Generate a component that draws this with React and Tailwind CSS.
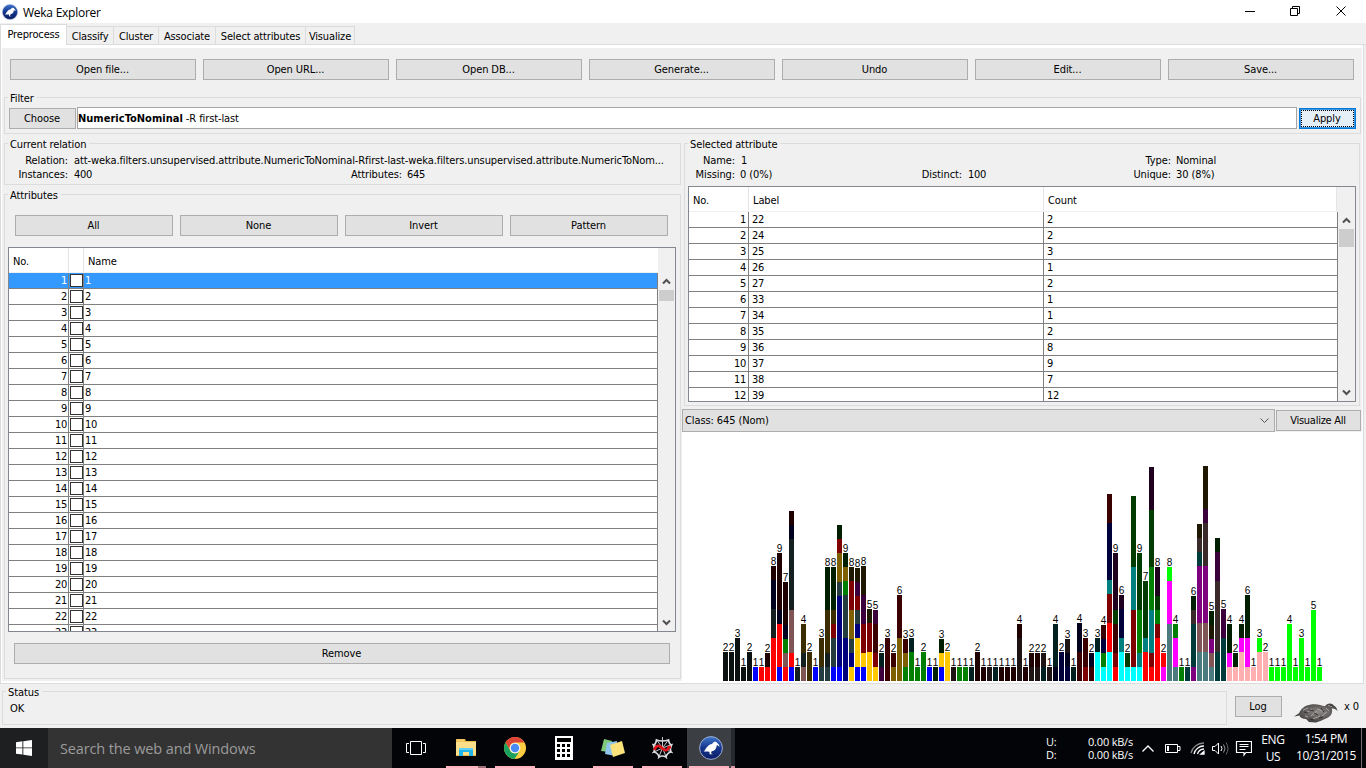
import React from "react";

const K = {
  k: "#0b1010", b: "#0000ff", r: "#ff0000", d: "#1f0000", n: "#00001f", g: "#141f1f",
  w: "#7f5555", G: "#007f00", o: "#3b2d00", s: "#243b3f", e: "#001f00", R: "#7f0000",
  O: "#7f6000", N: "#00007f", y: "#ffc800", t: "#1f1800", p: "#3b003b", m: "#3b0000",
  T: "#001f1f", h: "#1f1414", v: "#00003b", c: "#00ffff", C: "#007f7f", E: "#003b00",
  P: "#1f001f", M: "#ff00ff", S: "#4b7b7f", L: "#00ff00", q: "#003b3b", V: "#7f007f",
  H: "#3b2a2a", i: "#ffafaf",
};

// One entry per attribute value; each letter is a single instance, bottom to top.
const BARS = (
  "kk kk kkk k kk b r rd rrrggnnd brrrndddd rwGnddd brwwwgggggnd g wgoo oo b soo sgoooeee bssRoeee " +
  "bNNNNNsOORe NNNsssGOe yNsOORRt byyNsRpt byRRpptt yyRRt yRmmp pT mmm Om OOOmmm GOm GGT G GG b e bye yy " +
  "h G G T dd d h T d d d hhhd d hd hd Th h nTTT vv vnh T mmnn Rmm mn ccT cGvm ccrrRRCvvvvmm rRmmEPPPP " +
  "ccCvvP cE cRRRRCCCEEEEE cCGGGEEEE rrCEEEE rRCCCGGGEEEEPPP rrrRGEPP Mr SSSSMMML SMMG G q VqqqHe " +
  "SSwwVVVVqHt SSwwVVVVHHHpttt SwVte qqHHHHHppe qqqpp iMee ie iiMe iMMeee i iiL ii L L L LLLL L LLL L LLLLL L"
).split(" ");

const UNIT = 14.29;
const BASE = 249;

function stack(bar) {
  let y = BASE;
  return bar.match(/(.)\1*/g).map((run) => {
    const h = Math.round(run.length * UNIT);
    y -= h;
    return { y, h, fill: K[run[0]] };
  });
}

function Histogram() {
  return (
    <svg width="681" height="250" className="block bg-white" shapeRendering="crispEdges">
      {BARS.map((bar, i) => {
        const x = 41 + i * 6;
        const parts = stack(bar);
        return (
          <g key={i}>
            {parts.map((p, j) => (
              <rect key={j} x={x} y={p.y} width="5" height={p.h} fill={p.fill} />
            ))}
            {bar.length < 10 && (
              <text x={x + 2.5} y={parts[parts.length - 1].y - 1} textAnchor="middle" fontSize="10" fontFamily="Liberation Sans, sans-serif" fill="#000">
                {bar.length}
              </text>
            )}
          </g>
        );
      })}
    </svg>
  );
}

function Btn({ children, className = "" }) {
  return (
    <button className={"flex h-[21px] shrink-0 items-center justify-center border border-[#adadad] bg-[#e1e1e1] pr-px whitespace-nowrap " + className}>
      {children}
    </button>
  );
}

function Group({ title, className = "", children }) {
  return (
    <section className={"shrink-0 border border-[#dcdcdc] " + className}>
      <div className="-mt-[7px] flex h-[15px]">
        <span className="ml-[3px] h-[15px] bg-[#f0f0f0] pt-px pr-[3px] pl-[2px] leading-[14px] whitespace-nowrap">{title}</span>
      </div>
      {children}
    </section>
  );
}

function Arrow({ down }) {
  return (
    <svg width="9" height="7" viewBox="0 0 9 7" className="block">
      <path d={down ? "M1 1.5 L4.5 5 L8 1.5" : "M1 5.5 L4.5 2 L8 5.5"} fill="none" stroke="#505050" strokeWidth="2" />
    </svg>
  );
}

function Scrollbar({ thumb }) {
  return (
    <div className="flex w-[17px] shrink-0 flex-col items-center bg-[#f0f0f0]">
      <div className="flex h-[17px] items-center"><Arrow /></div>
      <div className={"w-[15px] bg-[#cdcdcd] " + thumb} />
      <div className="mt-auto flex h-[17px] items-center"><Arrow down /></div>
    </div>
  );
}

function AttributeTable() {
  return (
    <div className="ml-[3px] flex h-[385px] w-[668px] flex-col border border-[#828790] bg-white">
      <div className="flex h-[25px] shrink-0 items-center border-b border-[#f0f0f0]">
        <span className="flex h-full w-[60px] items-center border-r border-[#e5e5e5] pt-[3px] pl-[4px]">No.</span>
        <span className="h-full w-[15px] border-r border-[#e5e5e5]" />
        <span className="flex h-full w-[574px] items-center pt-[3px] pl-[4px]">Name</span>
        <span className="h-full flex-1 bg-[#f0f0f0]" />
      </div>
      <div className="flex min-h-0 flex-1">
        <div className="w-[649px] overflow-hidden border-r border-[#808080]">
          {Array.from({ length: 23 }, (_, i) => (
            <div key={i} className={"flex h-[16px] border-b border-[#808080] leading-[15px] tracking-[-0.25px] " + (i === 0 ? "bg-[#3399ff] text-white" : "")}>
              <span className="w-[60px] border-r border-[#808080] pr-px text-right">{i + 1}</span>
              <span className="w-[15px] border-r border-[#808080] pt-px pl-px">
                <span className="block h-[13px] w-[13px] border border-[#333] bg-white" />
              </span>
              <span className="pl-[1px]">{i + 1}</span>
            </div>
          ))}
        </div>
        <Scrollbar thumb="h-[11px]" />
      </div>
    </div>
  );
}

const LABELS = [[22, 2], [24, 2], [25, 3], [26, 1], [27, 2], [33, 1], [34, 1], [35, 2], [36, 8], [37, 9], [38, 7], [39, 12]];

function LabelTable() {
  return (
    <div className="ml-[3px] flex h-[216px] w-[668px] flex-col border border-[#828790] bg-white">
      <div className="flex h-[25px] shrink-0 items-center border-b border-[#f0f0f0]">
        <span className="flex h-full w-[60px] items-center border-r border-[#e5e5e5] pt-[3px] pl-[4px]">No.</span>
        <span className="flex h-full w-[295px] items-center border-r border-[#e5e5e5] pt-[3px] pl-[4px]">Label</span>
        <span className="flex h-full w-[293px] items-center border-r border-[#e5e5e5] pt-[3px] pl-[4px]">Count</span>
        <span className="h-full flex-1 bg-[#f0f0f0]" />
      </div>
      <div className="flex min-h-0 flex-1">
        <div className="w-[649px] overflow-hidden border-r border-[#808080]">
          {LABELS.map(([l, c], i) => (
            <div key={l} className="flex h-[16px] border-b border-[#808080] leading-[16px] tracking-[-0.25px]">
              <span className="w-[60px] border-r border-[#808080] pr-[2px] text-right">{i + 1}</span>
              <span className="w-[295px] border-r border-[#808080] pl-[3px]">{l}</span>
              <span className="pl-[3px]">{c}</span>
            </div>
          ))}
        </div>
        <Scrollbar thumb="h-[18px]" />
      </div>
    </div>
  );
}

function WekaIcon({ size }) {
  return (
    <svg width={size} height={size} viewBox="0 0 24 24" className="block shrink-0">
      <defs>
        <linearGradient id="wk" x1="0" y1="0" x2="0" y2="1">
          <stop offset="0" stopColor="#3f76cc" />
          <stop offset="0.5" stopColor="#15358c" />
          <stop offset="1" stopColor="#0b1d66" />
        </linearGradient>
      </defs>
      <circle cx="12" cy="12" r="11.4" fill="url(#wk)" stroke="#a9b8d8" strokeWidth="0.9" />
      <path d="M4.5 15.8 C6 14.5 6.8 11.5 9.5 9.4 C11 8.3 12.8 8.3 13.7 7.2 C14.5 5.3 17.6 5.1 18.5 7.3 C19.7 8.1 20.3 9.4 20.5 11 C19.6 9.8 18.7 9.2 17.7 9.3 C17.6 11.5 17 13.5 14.6 14.8 L12.4 15.6 L12.1 17.5 L14 18.3 L10.6 18.3 L10.5 15.8 C8.6 15.9 7.6 15.3 4.5 15.8Z" fill="#fff" />
    </svg>
  );
}

function Kiwi() {
  return (
    <svg width="46" height="22" viewBox="0 0 46 22" className="block shrink-0">
      <defs>
        <radialGradient id="kw" cx="0.55" cy="0.45" r="0.6">
          <stop offset="0" stopColor="#8e8a88" />
          <stop offset="0.6" stopColor="#5c5958" />
          <stop offset="1" stopColor="#353332" />
        </radialGradient>
      </defs>
      <path d="M1 14.5 L6 11.2 C8 6.5 12 3.3 18 2.5 C24 1.5 28 3.5 32 4.2 C34 .8 39 .6 40.8 3.5 C42.8 4.5 44 6.3 44.5 9 C42.8 7.2 41 6 38.8 6.5 C40 10.5 38.2 14.6 33.5 16.2 L28 18.8 L23 20.6 L16 20 L13 17 C9.5 17 7 15.5 6.5 13.5Z" fill="url(#kw)" />
      <path d="M10 8 l5 -2 M13 11 l6 -4 M18 14 l6 -5 M24 7 l6 2 M20 17 l7 -3 M29 14 l5 -4 M35 3.5 l4 1 M33 6 l3 3 M12 14 l3 1" stroke="#b5b0ad" strokeWidth="0.8" fill="none" />
      <path d="M11 10 l4 1 M16 8 l5 1 M21 11 l4 2 M17 17 l4 1 M28 6 l3 4 M26 16 l4 -1 M38 3 v1" stroke="#282626" strokeWidth="0.9" fill="none" />
    </svg>
  );
}

function TaskItem({ className, children, line = "" }) {
  return (
    <div className={"flex h-[40px] shrink-0 flex-col items-center " + className}>
      <div className="flex h-[38px] items-center pt-[2px]">{children}</div>
      <div className={"h-[2px] w-full " + line} />
    </div>
  );
}

function Taskbar() {
  return (
    <footer className="flex h-[40px] w-[1366px] shrink-0 bg-[#020408] font-['Open_Sans','Noto_Sans',sans-serif] tracking-normal text-white">
      <div className="flex w-[48px] shrink-0 items-center justify-center bg-[#1d1f21]">
        <svg width="16" height="16" viewBox="0 0 16 16"><path d="M0 2.2 L6.4 1.3 V7.4 H0Z M7.3 1.2 L16 0 V7.4 H7.3Z M0 8.3 H6.4 V14.6 L0 13.7Z M7.3 8.3 H16 V16 L7.3 14.7Z" fill="#fff" /></svg>
      </div>
      <div className="flex w-[344px] shrink-0 items-center bg-[#333] pt-[2px] pl-[12px] text-[14.5px] tracking-[-0.13px] text-[#9b9b9b]">
        Search the web and Windows
      </div>
      <TaskItem className="w-[48px]">
        <svg width="20" height="16" viewBox="0 0 20 16" fill="none" stroke="#fff"><path d="M4.5 1.5h11v13h-11z M3 3.5H.5v9H3 M17 3.5h2.500v9H17" /></svg>
      </TaskItem>
      <TaskItem className="ml-[6px] w-[40px]" line="bg-gradient-to-r from-[#ffb3be] from-80% to-[#a07078] to-80%">
        <svg width="22" height="20" viewBox="0 0 22 20">
          <path d="M1 1h9l1 2h10v15H1z" fill="#e9b94c" /><path d="M1 4h20v13H1z" fill="#ffe08a" /><path d="M2 1.500h7v2H2z" fill="#f7d06b" />
          <path d="M4 18v-8h14v8h-4v-4H8v4z" fill="#21b5ea" /><path d="M4 10h14v2H4z" fill="#62cff5" />
        </svg>
      </TaskItem>
      <TaskItem className="ml-[9px] w-[40px]" line="bg-[#ffb3be]">
        <svg width="22" height="22" viewBox="0 0 22 22">
          <circle cx="11" cy="11" r="11" fill="#ffcd42" />
          <path d="M1.5 5.5 A11 11 0 0 1 20.500 5.500 L11 5.500 A5.500 5.500 0 0 0 6.200 13.700Z" fill="#dc4437" />
          <path d="M1.500 5.500 A11 11 0 0 0 10.500 22 L15.700 13.800 A5.500 5.500 0 0 1 6.200 13.700Z" fill="#1aa15f" />
          <circle cx="11" cy="11" r="5.300" fill="#f4f4f4" /><circle cx="11" cy="11" r="4.200" fill="#4a8af4" />
        </svg>
      </TaskItem>
      <TaskItem className="ml-[9px] w-[40px]">
        <svg width="18" height="24" viewBox="0 0 18 24" shapeRendering="crispEdges">
          <path d="M0 0h18v24H0z" fill="#fff" />
          <path d="M2 2h14v4H2z M2 8h3v3H2z M7 8h3v3H7z M12 8h3v3h-3z M2 13h3v3H2z M7 13h3v3H7z M12 13h3v3h-3z M2 18h3v3H2z M7 18h3v3H7z M12 18h3v3h-3z" fill="#000" />
        </svg>
      </TaskItem>
      <TaskItem className="ml-[9px] w-[40px]" line="bg-[#ffb3be]">
        <svg width="24" height="19" viewBox="0 0 24 19">
          <path d="M3 0 L11 2 L8 13 L0 12Z" fill="#7fc97a" /><path d="M6 4 L16 2 L15 17 L4 15Z" fill="#8fc5ee" />
          <path d="M9 6 L21 2 L24 14 L12 18Z" fill="#fbe27a" />
        </svg>
      </TaskItem>
      <TaskItem className="ml-[9px] w-[40px]" line="bg-[#ffb3be]">
        <svg width="23" height="24" viewBox="0 0 23 24" fill="none" stroke="#ddd">
          <path d="M11.500 12 L11.500 1 M11.500 12 L18 3 M11.500 12 L22 8 M11.500 12 L22 17 M11.500 12 L16 23 M11.500 12 L7 23 M11.500 12 L1 17 M11.500 12 L1 8 M11.500 12 L5 3" strokeWidth="0.900" />
          <path d="M5.500 4 Q11 6 17.500 4 Q18 8 20.500 9 Q18.500 13 20 16 Q16 17 15 21 Q11.500 19 8 21 Q7 17 3 16 Q4.500 13 2.500 9 Q5 8 5.500 4Z" strokeWidth="1.700" />
          <path d="M3.500 14 C5 8.500 8.500 9 11.500 12.500 C14.500 15.500 17 14 17.500 11.500 L20 11" stroke="#e0141b" strokeWidth="2.800" />
        </svg>
      </TaskItem>
      <div className="ml-[5px] flex w-[48px] shrink-0">
        <TaskItem className="w-[44px] bg-[#3b3e42] pl-[4px]" line="-ml-[4px] w-[44px] bg-[#ffb3be]"><WekaIcon size={24} /></TaskItem>
        <TaskItem className="w-[4px] bg-[#25282c]" line="bg-[#d898a2]" />
      </div>
      <div className="ml-auto flex shrink-0">
        <div className="flex w-[87px] flex-col pt-[7px] text-[11px] leading-[13px] tracking-[-0.2px]">
          <div className="flex justify-between"><span>U:</span><span>0.00 kB/s</span></div>
          <div className="flex justify-between"><span>D:</span><span>0.00 kB/s</span></div>
        </div>
        <svg width="112" height="40" viewBox="1139 0 112 40" className="ml-[7px]" fill="none" stroke="#fff">
          <path d="M1141.500 23.500 l5.500 -5.500 l5.500 5.500" strokeWidth="1.300" />
          <path d="M1164.500 16.500h12v8h-12z M1177 18.500h2v4h-2" /><path d="M1166 18h2v5h-2z" fill="#fff" stroke="none" />
          <g strokeWidth="1.300"><path d="M1190 25 A13 13 0 0 1 1203 15" stroke="#888" /><path d="M1193 26 A10 10 0 0 1 1203 18" /><path d="M1196.500 26 A7 7 0 0 1 1203 21" /><path d="M1200 26 L1203 26 L1203 23.500Z" fill="#fff" /></g>
          <path d="M1211.500 18.500h2.500l3.500 -3.500v11l-3.500 -3.500h-2.500z" /><path d="M1220 18 q2 2.500 0 5" /><path d="M1222.500 16.500 q3 4 0 8" stroke="#999" /><path d="M1225 14.500 q4 6 0 12" stroke="#666" />
          <path d="M1235.500 13.500h15v11h-5.500l-2 2.500v-2.500h-7.500z M1238.500 16.500h9 M1238.500 18.500h9 M1238.500 21.500h6" strokeWidth="1.200" />
        </svg>
        <div className="ml-[8px] flex w-[26px] flex-col items-center pt-[3px] text-[12px] leading-[17px] tracking-[-0.3px]"><span>ENG</span><span>US</span></div>
        <div className="ml-[10px] flex w-[60px] flex-col items-center pt-[2px] text-[12px] leading-[17px] tracking-[-0.35px] whitespace-nowrap"><span>1:54 PM</span><span>10/31/2015</span></div>
        <div className="mr-[4px] ml-[5px] w-px bg-[#6c6e70]" />
      </div>
    </footer>
  );
}

const TABS = [["Classify", "w-[47px]"], ["Cluster", "w-[45px]"], ["Associate", "w-[57px]"], ["Select attributes", "w-[90px]"], ["Visualize", "w-[49px]"]];

export default function App() {
  return (
    <div className="flex h-[768px] w-[1366px] flex-col overflow-hidden bg-[#f0f0f0] font-['DejaVu_Sans_Condensed','DejaVu_Sans',sans-serif] text-[11px] leading-[14px] tracking-[-0.1px] text-black">
      <header className="flex h-[23px] shrink-0 items-center bg-white pl-[2px] font-['Open_Sans',sans-serif] text-[12px] tracking-[-0.25px]">
        <WekaIcon size={16} />
        <span className="ml-[5px] pt-[2px]">Weka Explorer</span>
        <svg width="110" height="14" viewBox="0 0 110 14" className="mr-[16px] mb-[2px] ml-auto" fill="none" stroke="#000">
          <path d="M5 7.500h10" /><path d="M50.500 4.500h7v7h-7z M52.500 4.500v-2h7v7h-2" /><path d="M96.500 2.500l9 9 M105.500 2.500l-9 9" />
        </svg>
      </header>
      <nav className="flex h-[22px] shrink-0 items-end">
        <div className="flex h-[21px] w-[67px] justify-center border-x border-t border-[#dcdcdc] bg-white pt-[3px] tracking-[-0.15px]">Preprocess</div>
        {TABS.map(([t, w]) => (
          <div key={t} className={"flex h-[19px] items-center justify-center border-y border-r border-[#dcdcdc] pt-[2px] tracking-[-0.15px] whitespace-nowrap " + w}>{t}</div>
        ))}
        <div className="h-px flex-1 bg-[#dcdcdc]" />
      </nav>
      <main className="mr-[2px] flex h-[639px] shrink-0 flex-col border-r border-b border-l border-[#dcdcdc] bg-white pt-[3px] pr-px pb-[2px] pl-px">
        <div className="flex min-h-0 flex-1 flex-col bg-[#f0f0f0] pl-[2px]">
          <div className="mt-[11px] ml-[6px] flex gap-[7px]">
            {["Open file...", "Open URL...", "Open DB...", "Generate...", "Undo", "Edit...", "Save..."].map((t) => <Btn key={t} className="w-[186px]">{t}</Btn>)}
          </div>
          <Group title="Filter" className="mt-[17px] h-[37px] w-[1357px]">
            <div className="mt-px ml-[4px] flex items-center">
              <Btn className="mt-px w-[67px]">Choose</Btn>
              <div className="ml-px flex h-[22px] w-[1220px] items-center border border-[#a5a5a5] bg-white pt-px whitespace-pre"><b className="tracking-[0.02px]">NumericToNominal</b> -R first-last</div>
              <button className="mt-px ml-[2px] h-[21px] w-[57px] border border-[#0078d7] bg-[#3a94df] p-px">
                <span className="flex h-full items-center justify-center border border-dotted border-black bg-[#e5eff8] pr-px">Apply</span>
              </button>
            </div>
          </Group>
          <div className="mt-[9px] flex">
            <div className="w-[677px] shrink-0">
              <Group title="Current relation" className="h-[42px] w-[677px]">
                <div className="mt-[2px] flex"><span className="w-[63px] text-right">Relation:</span><span className="ml-[6px] whitespace-nowrap">att-weka.filters.unsupervised.attribute.NumericToNominal-Rfirst-last-weka.filters.unsupervised.attribute.NumericToNom...</span></div>
                <div className="flex"><span className="w-[63px] text-right">Instances:</span><span className="ml-[6px] w-[60px] tracking-[-0.25px]">400</span><span className="w-[268px] text-right">Attributes:</span><span className="ml-[5px] tracking-[-0.25px]">645</span></div>
              </Group>
              <Group title="Attributes" className="mt-[9px] h-[485px] w-[677px]">
                <div className="mt-[12px] ml-[10px] flex gap-[7px]">
                  {["All", "None", "Invert", "Pattern"].map((t) => <Btn key={t} className="w-[158px]">{t}</Btn>)}
                </div>
                <div className="mt-[11px]"><AttributeTable /></div>
                <Btn className="mt-[11px] ml-[9px] w-[656px]">Remove</Btn>
              </Group>
            </div>
            <div className="ml-px flex w-[681px] shrink-0 flex-col">
              <Group title="Selected attribute" className="ml-[2px] h-[263px] w-[676px]">
                <div className="mt-[2px] flex"><span className="w-[50px] text-right">Name:</span><span className="ml-[6px] w-[60px]">1</span><span className="w-[370px] text-right">Type:</span><span className="ml-[5px]">Nominal</span></div>
                <div className="flex"><span className="w-[50px] text-right">Missing:</span><span className="ml-[5px] w-[61px]">0 (0%)</span><span className="w-[161px] text-right">Distinct:</span><span className="ml-[6px] w-[60px] tracking-[-0.25px]">100</span><span className="w-[143px] text-right">Unique:</span><span className="ml-[5px]">30 (8%)</span></div>
                <div className="mt-[4px]"><LabelTable /></div>
              </Group>
              <div className="mt-[3px] flex h-[23px] items-center">
                <div className="flex h-[23px] w-[593px] items-center justify-between border border-[#adadad] bg-[#e1e1e1] pr-[5px] pl-[2px]">
                  <span>Class: 645 (Nom)</span>
                  <svg width="9" height="7" viewBox="0 0 9 7" fill="none" stroke="#555"><path d="M0.500 1.500 L4.500 5.500 L8.500 1.500" /></svg>
                </div>
                <Btn className="ml-px w-[85px] tracking-[-0.25px]">Visualize All</Btn>
              </div>
              <Histogram />
            </div>
          </div>
        </div>
      </main>
      <div className="flex h-[44px] shrink-0">
        <Group title="Status" className="mt-[7px] ml-[2px] h-[34px] w-[1225px]">
          <div className="mt-[2px] ml-[7px]">OK</div>
        </Group>
        <Btn className="mt-[12px] ml-[8px] w-[47px]">Log</Btn>
        <div className="mt-[18px] ml-[11px]"><Kiwi /></div>
        <span className="mt-[16px] ml-[5px] whitespace-nowrap">x 0</span>
      </div>
      <Taskbar />
    </div>
  );
}
